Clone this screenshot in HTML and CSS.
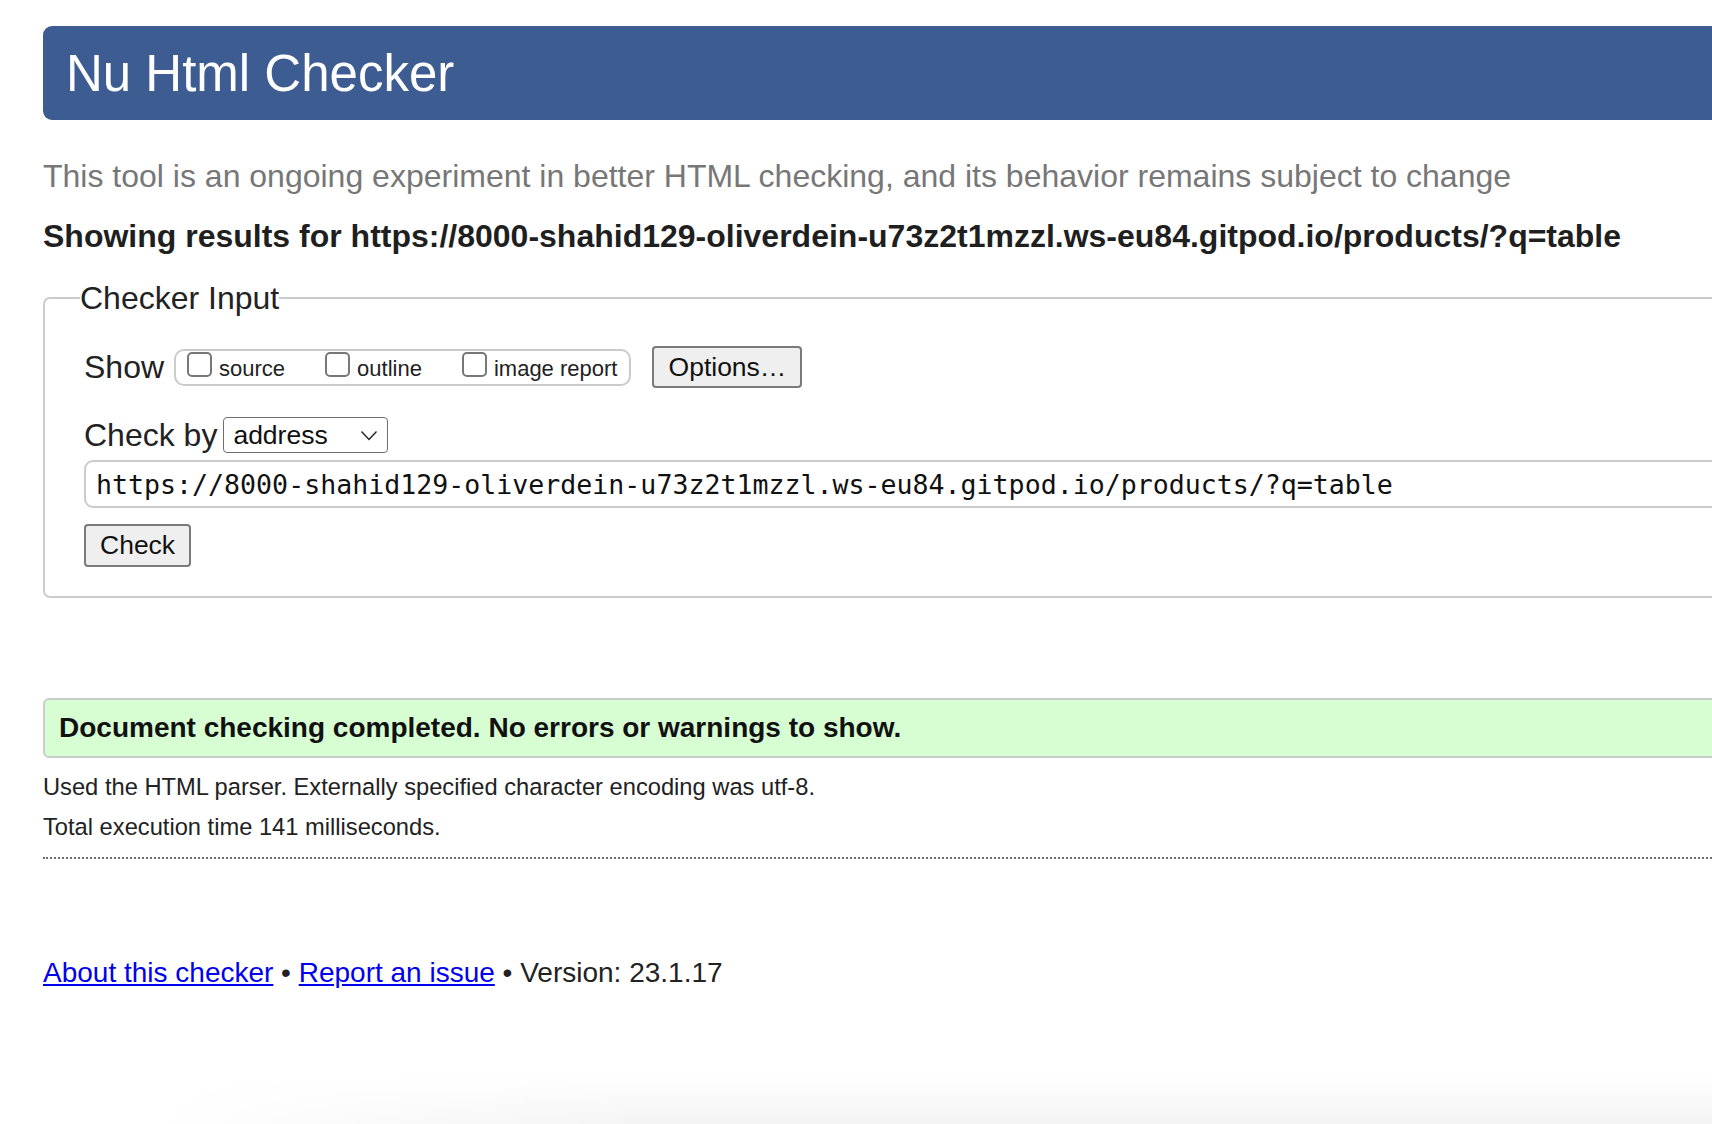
FILE: index.html
```html
<!DOCTYPE html>
<html lang="en">
<head>
<meta charset="utf-8">
<title>Showing results for https://8000-shahid129-oliverdein-u73z2t1mzzl.ws-eu84.gitpod.io/products/?q=table - Nu Html Checker</title>
<link rel="stylesheet" href="styles.css">
</head>
<body>
<div class="page">
  <h1 class="banner">Nu Html Checker</h1>
  <p class="intro">This tool is an ongoing experiment in better HTML checking, and its behavior remains subject to change</p>
  <p class="showing">Showing results for https://8000-shahid129-oliverdein-u73z2t1mzzl.ws-eu84.gitpod.io/products/?q=table</p>

  <form class="checker-form">
    <fieldset class="checker">
      <legend class="checker-legend">Checker Input</legend>
      <div class="row row-show">
        <span class="row-label">Show</span>
        <span class="show-group">
          <label class="opt"><input type="checkbox" class="cb"><span class="opt-text">source</span></label>
          <label class="opt"><input type="checkbox" class="cb"><span class="opt-text">outline</span></label>
          <label class="opt"><input type="checkbox" class="cb"><span class="opt-text">image report</span></label>
        </span>
        <button type="button" class="btn btn-options">Options…</button>
      </div>
      <div class="row row-by">
        <span class="row-label">Check by</span>
        <span class="select-wrap">
          <select class="select"><option>address</option></select>
          <svg class="chev" width="18" height="11" viewBox="0 0 18 11"><path d="M1.5 1.5 L9 9.5 L16.5 1.5" fill="none" stroke="#222" stroke-width="1.4"/></svg>
        </span>
      </div>
      <input class="url" type="text" value="https://8000-shahid129-oliverdein-u73z2t1mzzl.ws-eu84.gitpod.io/products/?q=table">
      <div class="row-submit">
        <button type="button" class="btn btn-check">Check</button>
      </div>
    </fieldset>
  </form>

  <p class="success">Document checking completed. No errors or warnings to show.</p>
  <p class="details">Used the HTML parser. Externally specified character encoding was utf-8.</p>
  <p class="details details-time">Total execution time 141 milliseconds.</p>
  <hr class="dots">
  <p class="footer"><a href="#about">About this checker</a> • <a href="#issue">Report an issue</a> • Version: 23.1.17</p>
</div>
<div class="bottom-shade"></div>
</body>
</html>
```
FILE: styles.css
```css
html, body {
  margin: 0;
  padding: 0;
  background: #ffffff;
  overflow: hidden;
}

body {
  font-family: "Liberation Sans", Arial, Helvetica, sans-serif;
  color: #222222;
}

.page {
  margin-left: 43px;
  width: 1760px;
  padding-bottom: 40px;
}

.banner {
  margin: 26px 0 0;
  height: 94px;
  box-sizing: border-box;
  display: flex;
  align-items: center;
  padding-left: 23px;
  background: #3d5c92;
  color: #ffffff;
  font-size: 51px;
  font-weight: normal;
  line-height: 1;
  border-radius: 9px 0 0 9px;
}

.intro {
  margin: 36px 0 0;
  font-size: 32px;
  line-height: 40px;
  color: #777777;
}

.showing {
  margin: 20px 0 0;
  font-size: 32px;
  line-height: 40px;
  font-weight: bold;
  color: #1f1f1f;
}

.checker-form {
  margin: 22px 0 0;
}

.checker {
  margin: 0;
  padding: 28px 30px 29px 39px;
  border: 2px solid #cbcbcb;
  border-radius: 7px;
  min-width: 0;
}

.checker-legend {
  margin-left: -4px;
  padding: 0;
  font-size: 32px;
  line-height: 40px;
  color: #222222;
}

.row {
  display: flex;
  align-items: center;
}

.row-show {
  height: 42px;
}

.row-label {
  font-size: 32px;
  line-height: 40px;
  color: #222222;
}

.show-group {
  display: inline-flex;
  align-items: center;
  margin-left: 10px;
  height: 37px;
  box-sizing: border-box;
  border: 2px solid #cbcbcb;
  border-radius: 10px;
  padding: 0 12px 0 11px;
  gap: 40px;
}

.opt {
  display: inline-flex;
  align-items: center;
  font-size: 22px;
  line-height: 28px;
  color: #222222;
}

.opt-text {
  margin-top: 4px;
}

.cb {
  appearance: none;
  -webkit-appearance: none;
  width: 25px;
  height: 25px;
  margin: 0 7px 6px 0;
  box-sizing: border-box;
  border: 2px solid #777777;
  border-radius: 5px;
  background: #ffffff;
}

.btn {
  font-family: "Liberation Sans", Arial, Helvetica, sans-serif;
  font-size: 26.5px;
  color: #111111;
  background: #efefef;
  border: 2px solid #7a7a7a;
  border-radius: 4px;
  box-sizing: border-box;
  padding: 0 14px;
  line-height: 1;
}

.btn-options {
  margin-left: 21px;
  width: 150px;
  height: 42px;
}

.row-by {
  margin-top: 27px;
  height: 40px;
}

.select-wrap {
  position: relative;
  display: inline-block;
  margin-left: 6px;
}

.select {
  appearance: none;
  -webkit-appearance: none;
  display: block;
  width: 165px;
  height: 36px;
  box-sizing: border-box;
  border: 1px solid #6f6f6f;
  border-radius: 4px;
  background: #ffffff;
  padding: 0 0 0 9px;
  font-family: "Liberation Sans", Arial, Helvetica, sans-serif;
  font-size: 26.5px;
  color: #111111;
}

.chev {
  position: absolute;
  right: 10px;
  top: 13px;
  pointer-events: none;
}

.url {
  display: block;
  margin-top: 5px;
  width: 100%;
  height: 48px;
  box-sizing: border-box;
  border: 2px solid #cbcbcb;
  border-radius: 9px;
  padding: 0 0 0 10px;
  font-family: "DejaVu Sans Mono", "Liberation Mono", monospace;
  font-size: 26.6px;
  color: #111111;
  background: #ffffff;
}

.row-submit {
  margin-top: 16px;
  display: flex;
}

.btn-check {
  width: 107px;
  height: 43px;
}

.success {
  margin: 100px 0 0;
  height: 60px;
  box-sizing: border-box;
  border: 2px solid #cbcbcb;
  border-radius: 6px;
  background: #d7fdd2;
  padding-left: 14px;
  font-size: 28px;
  font-weight: bold;
  line-height: 56px;
  color: #111111;
}

.details {
  margin: 14px 0 0;
  font-size: 23.7px;
  line-height: 30px;
  color: #222222;
}

.details-time {
  margin-top: 10px;
}

.dots {
  margin: 15px 0 0;
  border: 0;
  border-top: 2px dotted #6e6e6e;
  height: 0;
}

.footer {
  margin: 97px 0 0;
  font-size: 28px;
  line-height: 34px;
  color: #222222;
}

.footer a {
  color: #0000ee;
  text-decoration: underline;
}

.bottom-shade {
  position: fixed;
  left: 150px;
  right: 0;
  bottom: 0;
  height: 50px;
  pointer-events: none;
  background: linear-gradient(to bottom, rgba(0, 0, 0, 0), rgba(0, 0, 0, 0.045));
  -webkit-mask-image: linear-gradient(to right, transparent, #000 500px);
  mask-image: linear-gradient(to right, transparent, #000 500px);
}
```
